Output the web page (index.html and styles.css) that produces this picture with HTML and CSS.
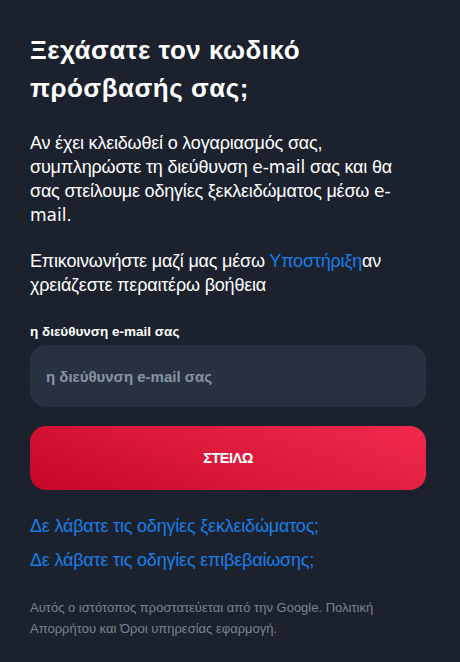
FILE: index.html
```html
<!DOCTYPE html>
<html lang="el">
<head>
<meta charset="utf-8">
<title>Ξεχάσατε τον κωδικό</title>
<link rel="stylesheet" href="styles.css">
</head>
<body>
<main class="page">
  <h1 class="title">Ξεχάσατε τον κωδικό πρόσβασής σας;</h1>
  <p class="text">Αν έχει κλειδωθεί ο λογαριασμός σας, συμπληρώστε τη διεύθυνση <span class="latin">e-mail</span> σας και θα σας στείλουμε οδηγίες ξεκλειδώματος μέσω <span class="latin">e-mail</span>.</p>
  <p class="text second">Επικοινωνήστε μαζί μας μέσω <a class="link" href="#">Υποστήριξη</a>αν χρειάζεστε περαιτέρω βοήθεια</p>
  <form class="form">
    <label class="label" for="email">η διεύθυνση e-mail σας</label>
    <input class="input" id="email" type="text" placeholder="η διεύθυνση e-mail σας">
    <button class="btn" type="button">ΣΤΕΙΛΩ</button>
  </form>
  <div class="links">
    <a class="link big" href="#">Δε λάβατε τις οδηγίες ξεκλειδώματος;</a>
    <a class="link big" href="#">Δε λάβατε τις οδηγίες επιβεβαίωσης;</a>
  </div>
  <p class="note">Αυτός ο ιστότοπος προστατεύεται από την Google. Πολιτική Απορρήτου και Όροι υπηρεσίας εφαρμογή.</p>
</main>
</body>
</html>
```
FILE: styles.css
```css
html, body {
  margin: 0;
  padding: 0;
  background: #1b222e;
}
body {
  font-family: "Liberation Sans", Arial, sans-serif;
  color: #ffffff;
}
.page {
  padding: 31px 34px 20px 30px;
  display: flex;
  flex-direction: column;
}
.title {
  margin: 0 0 24px;
  font-family: "Liberation Sans", Arial, sans-serif;
  font-weight: 700;
  font-size: 26px;
  line-height: 38px;
  letter-spacing: 0.5px;
}
.text {
  margin: 0;
  font-size: 18px;
  line-height: 24px;
  letter-spacing: -0.2px;
}
.latin {
  font-family: "DejaVu Sans", sans-serif;
  font-size: 17px;
  line-height: 1;
  letter-spacing: 0;
}
.second {
  margin-top: 22px;
}
.link {
  color: #1a7ee6;
  text-decoration: none;
}
.form {
  display: flex;
  flex-direction: column;
  margin-top: 27px;
}
.label {
  font-weight: 700;
  font-size: 13.5px;
  line-height: 16px;
  margin-bottom: 5px;
}
.input {
  height: 62px;
  box-sizing: border-box;
  border: none;
  border-radius: 16px;
  background: #273142;
  padding: 0 16px;
  font-family: "Liberation Sans", Arial, sans-serif;
  font-weight: 700;
  font-size: 15px;
  color: #ffffff;
  outline: none;
}
.input::placeholder {
  color: #8a93a3;
}
.btn {
  margin-top: 19px;
  height: 64px;
  border: none;
  border-radius: 16px;
  background: linear-gradient(200deg, #f22a4c 0%, #dc1a3c 50%, #c3072a 100%);
  color: #ffffff;
  font-family: "Liberation Sans", Arial, sans-serif;
  font-weight: 700;
  font-size: 14.5px;
  letter-spacing: -0.5px;
}
.links {
  display: flex;
  flex-direction: column;
  gap: 10px;
  margin-top: 24px;
}
.big {
  font-size: 18px;
  line-height: 24px;
  letter-spacing: -0.2px;
}
.note {
  margin: 25px 0 0;
  font-size: 13px;
  line-height: 21px;
  color: #7c8390;
}
```
